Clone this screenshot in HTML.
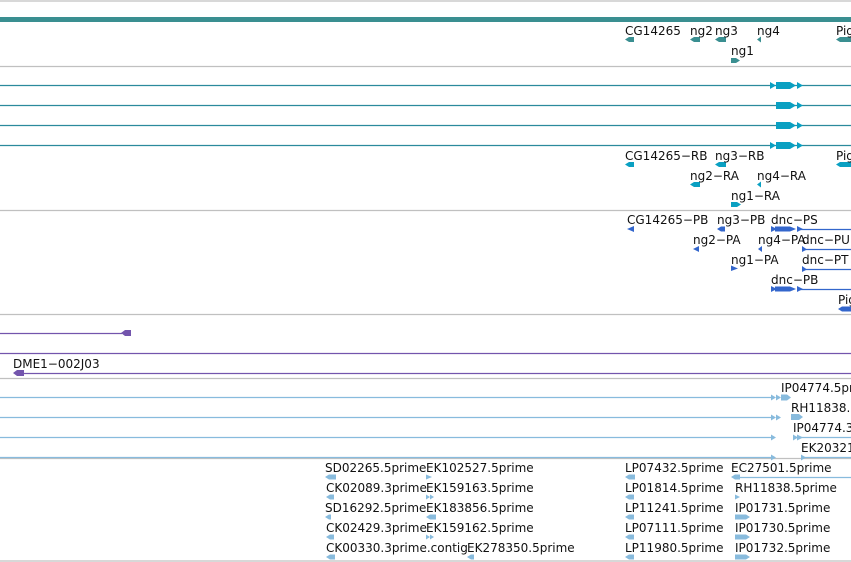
<!DOCTYPE html>
<html><head><meta charset="utf-8"><style>
html,body{margin:0;padding:0;background:#fff;width:851px;height:562px;overflow:hidden}
svg text{font-family:"DejaVu Sans","Liberation Sans",sans-serif;font-size:12px;fill:#111}
</style></head><body>
<svg width="851" height="562" xmlns="http://www.w3.org/2000/svg">
<g stroke="#c0c0c0" stroke-width="1.2">
<line x1="0" y1="1" x2="851" y2="1"/>
<line x1="0" y1="66.5" x2="851" y2="66.5"/>
<line x1="0" y1="210.5" x2="851" y2="210.5"/>
<line x1="0" y1="314.5" x2="851" y2="314.5"/>
<line x1="0" y1="378.5" x2="851" y2="378.5"/>
<line x1="0" y1="458.5" x2="851" y2="458.5"/>
<line x1="0" y1="561" x2="851" y2="561"/>
</g>
<rect x="0" y="17" width="851" height="5" fill="#3a8f91"/>
<g fill="#3a8f91">
<polygon points="625,39.5 629,37 634,37 634,42 629,42"/>
<polygon points="690,39.5 694,37 700,37 700,42 694,42"/>
<polygon points="715,39.5 719,37 726,37 726,42 719,42"/>
<polygon points="757,39.5 761,36.5 761,42.5"/>
<polygon points="836,39.5 840,37 851,37 851,42 840,42"/>
<polygon points="731,58 736,58 740,60.5 736,63 731,63"/>
</g>
<text x="625" y="35">CG14265</text><text x="690" y="35">ng2</text><text x="715" y="35">ng3</text><text x="757" y="35">ng4</text><text x="836" y="35">Pig</text>
<text x="731" y="55">ng1</text>
<g stroke="#2b8a9c" stroke-width="1.2">
<line x1="0" y1="85.5" x2="851" y2="85.5"/>
<line x1="0" y1="105.5" x2="851" y2="105.5"/>
<line x1="0" y1="125.5" x2="851" y2="125.5"/>
<line x1="0" y1="145.5" x2="851" y2="145.5"/>
</g>
<g fill="#0aa0c2">
<polygon points="770,82 776,85.5 770,89"/>
<polygon points="776,82 790,82 796,85.5 790,89 776,89"/>
<polygon points="797,82 803,85.5 797,89"/>
<polygon points="776,102 790,102 796,105.5 790,109 776,109"/>
<polygon points="797,102 803,105.5 797,109"/>
<polygon points="776,122 790,122 796,125.5 790,129 776,129"/>
<polygon points="797,122 803,125.5 797,129"/>
<polygon points="770,142 776,145.5 770,149"/>
<polygon points="776,142 790,142 796,145.5 790,149 776,149"/>
<polygon points="797,142 803,145.5 797,149"/>
<polygon points="625,164.5 629,162 634,162 634,167 629,167"/>
<polygon points="715,164.5 719,162 726,162 726,167 719,167"/>
<polygon points="836,164.5 840,162 851,162 851,167 840,167"/>
<polygon points="690,184.5 694,182 700,182 700,187 694,187"/>
<polygon points="757,184.5 761,181.5 761,187.5"/>
<polygon points="731,202 737,202 741,204.5 737,207 731,207"/>
</g>
<text x="625" y="160">CG14265−RB</text><text x="715" y="160">ng3−RB</text><text x="836" y="160">Pig</text>
<text x="690" y="180">ng2−RA</text><text x="757" y="180">ng4−RA</text>
<text x="731" y="200">ng1−RA</text>
<g stroke="#3366cc" stroke-width="1.2">
<line x1="800" y1="229.5" x2="851" y2="229.5"/>
<line x1="802" y1="249.5" x2="851" y2="249.5"/>
<line x1="802" y1="269.5" x2="851" y2="269.5"/>
<line x1="800" y1="289.5" x2="851" y2="289.5"/>
</g>
<g fill="#3366cc">
<polygon points="627,229 634,226 634,232"/>
<polygon points="717,229 721,226.5 725,226.5 725,231.5 721,231.5"/>
<polygon points="771,226 777,229 771,232"/><polygon points="775,226.5 790,226.5 796,229 790,231.5 775,231.5"/><polygon points="797,226 803,229 797,232"/>
<polygon points="693,249 699,246 699,252"/>
<polygon points="758,249 762,246 762,252"/>
<polygon points="802,246 807,249.5 802,252"/>
<polygon points="731,265.5 738,268.5 731,271"/>
<polygon points="802,266 807,269.5 802,272"/>
<polygon points="771,286 777,289 771,292"/><polygon points="775,286.5 790,286.5 796,289 790,291.5 775,291.5"/><polygon points="797,286 803,289 797,292"/>
<polygon points="838,309 842,306.5 851,306.5 851,311.5 842,311.5"/>
</g>
<text x="627" y="224">CG14265−PB</text><text x="717" y="224">ng3−PB</text><text x="771" y="224">dnc−PS</text>
<text x="693" y="244">ng2−PA</text><text x="758" y="244">ng4−PA</text><text x="802" y="244">dnc−PU</text>
<text x="731" y="264">ng1−PA</text><text x="802" y="264">dnc−PT</text>
<text x="771" y="284">dnc−PB</text>
<text x="838" y="304">Pig</text>
<g stroke="#7355ad" stroke-width="1.2">
<line x1="0" y1="333.5" x2="122" y2="333.5"/>
<line x1="0" y1="353.5" x2="851" y2="353.5"/>
<line x1="18" y1="373.5" x2="851" y2="373.5"/>
</g>
<g fill="#7355ad">
<polygon points="121,333 125,330 131,330 131,336 125,336"/>
<polygon points="13,373 17,370 24,370 24,376 17,376"/>
</g>
<text x="13" y="368">DME1−002J03</text>
<g stroke="#88bbdd" stroke-width="1.2">
<line x1="0" y1="397.5" x2="772" y2="397.5"/>
<line x1="0" y1="417.5" x2="772" y2="417.5"/>
<line x1="0" y1="437.5" x2="772" y2="437.5"/>
<line x1="0" y1="457.5" x2="772" y2="457.5"/>
<line x1="793" y1="437.5" x2="851" y2="437.5"/>
<line x1="801" y1="457.5" x2="851" y2="457.5"/>
<line x1="735" y1="477.5" x2="851" y2="477.5"/>
</g>
<g fill="#88bbdd">
<polygon points="771,394.5 776,397.5 771,400.5"/><polygon points="776,394.5 781,397.5 776,400.5"/><polygon points="781,394.5 787,394.5 791,397.5 787,400.5 781,400.5"/>
<polygon points="771,414.5 776,417.5 771,420.5"/><polygon points="776,414.5 781,417.5 776,420.5"/>
<polygon points="791,414 799,414 803,417 799,420 791,420"/>
<polygon points="771,434.5 776,437.5 771,440.5"/>
<polygon points="793,434.5 798,437.5 793,440.5"/><polygon points="797,434.5 803,437.5 797,440.5"/>
<polygon points="771,454.5 776,457.5 771,460.5"/>
<polygon points="801,454.5 806,457.5 801,460.5"/>
</g>
<text x="781" y="392">IP04774.5prime</text>
<text x="791" y="412">RH11838.5prime</text>
<text x="793" y="432">IP04774.3prime</text>
<text x="801" y="452">EK203211</text>
<g fill="#88bbdd">
<polygon points="325,477 329,474.5 336,474.5 336,479.5 329,479.5"/>
<polygon points="426,474.5 432,477 426,479.5"/>
<polygon points="625,477 629,474.5 635,474.5 635,479.5 629,479.5"/>
<polygon points="731,477 735,474.5 740,474.5 740,479.5 735,479.5"/>
<polygon points="326,497 330,494.5 334,494.5 334,499.5 330,499.5"/>
<polygon points="426,494.5 430,497 426,499.5"/><polygon points="430,494.5 434,497 430,499.5"/>
<polygon points="625,497 629,494.5 634,494.5 634,499.5 629,499.5"/>
<polygon points="735,494.5 740,497 735,499.5"/>
<polygon points="325,517 329,514.5 331,514.5 331,519.5 329,519.5"/>
<polygon points="426,517 430,514.5 436,514.5 436,519.5 430,519.5"/>
<polygon points="625,517 629,514.5 634,514.5 634,519.5 629,519.5"/>
<polygon points="735,514.5 746,514.5 750,517 746,519.5 735,519.5"/>
<polygon points="326,537 330,534.5 334,534.5 334,539.5 330,539.5"/>
<polygon points="426,534.5 430,537 426,539.5"/><polygon points="430,534.5 434,537 430,539.5"/>
<polygon points="625,537 629,534.5 634,534.5 634,539.5 629,539.5"/>
<polygon points="735,534.5 746,534.5 750,537 746,539.5 735,539.5"/>
<polygon points="326,557 330,554.5 335,554.5 335,559.5 330,559.5"/>
<polygon points="467,557 471,554.5 474,554.5 474,559.5 471,559.5"/>
<polygon points="625,557 629,554.5 634,554.5 634,559.5 629,559.5"/>
<polygon points="735,554.5 746,554.5 750,557 746,559.5 735,559.5"/>
</g>
<text x="325" y="472">SD02265.5prime</text><text x="426" y="472">EK102527.5prime</text><text x="625" y="472">LP07432.5prime</text><text x="731" y="472">EC27501.5prime</text>
<text x="326" y="492">CK02089.3prime</text><text x="426" y="492">EK159163.5prime</text><text x="625" y="492">LP01814.5prime</text><text x="735" y="492">RH11838.5prime</text>
<text x="325" y="512">SD16292.5prime</text><text x="426" y="512">EK183856.5prime</text><text x="625" y="512">LP11241.5prime</text><text x="735" y="512">IP01731.5prime</text>
<text x="326" y="532">CK02429.3prime</text><text x="426" y="532">EK159162.5prime</text><text x="625" y="532">LP07111.5prime</text><text x="735" y="532">IP01730.5prime</text>
<text x="326" y="552">CK00330.3prime.contig</text><text x="467" y="552">EK278350.5prime</text><text x="625" y="552">LP11980.5prime</text><text x="735" y="552">IP01732.5prime</text>
</svg>
</body></html>
